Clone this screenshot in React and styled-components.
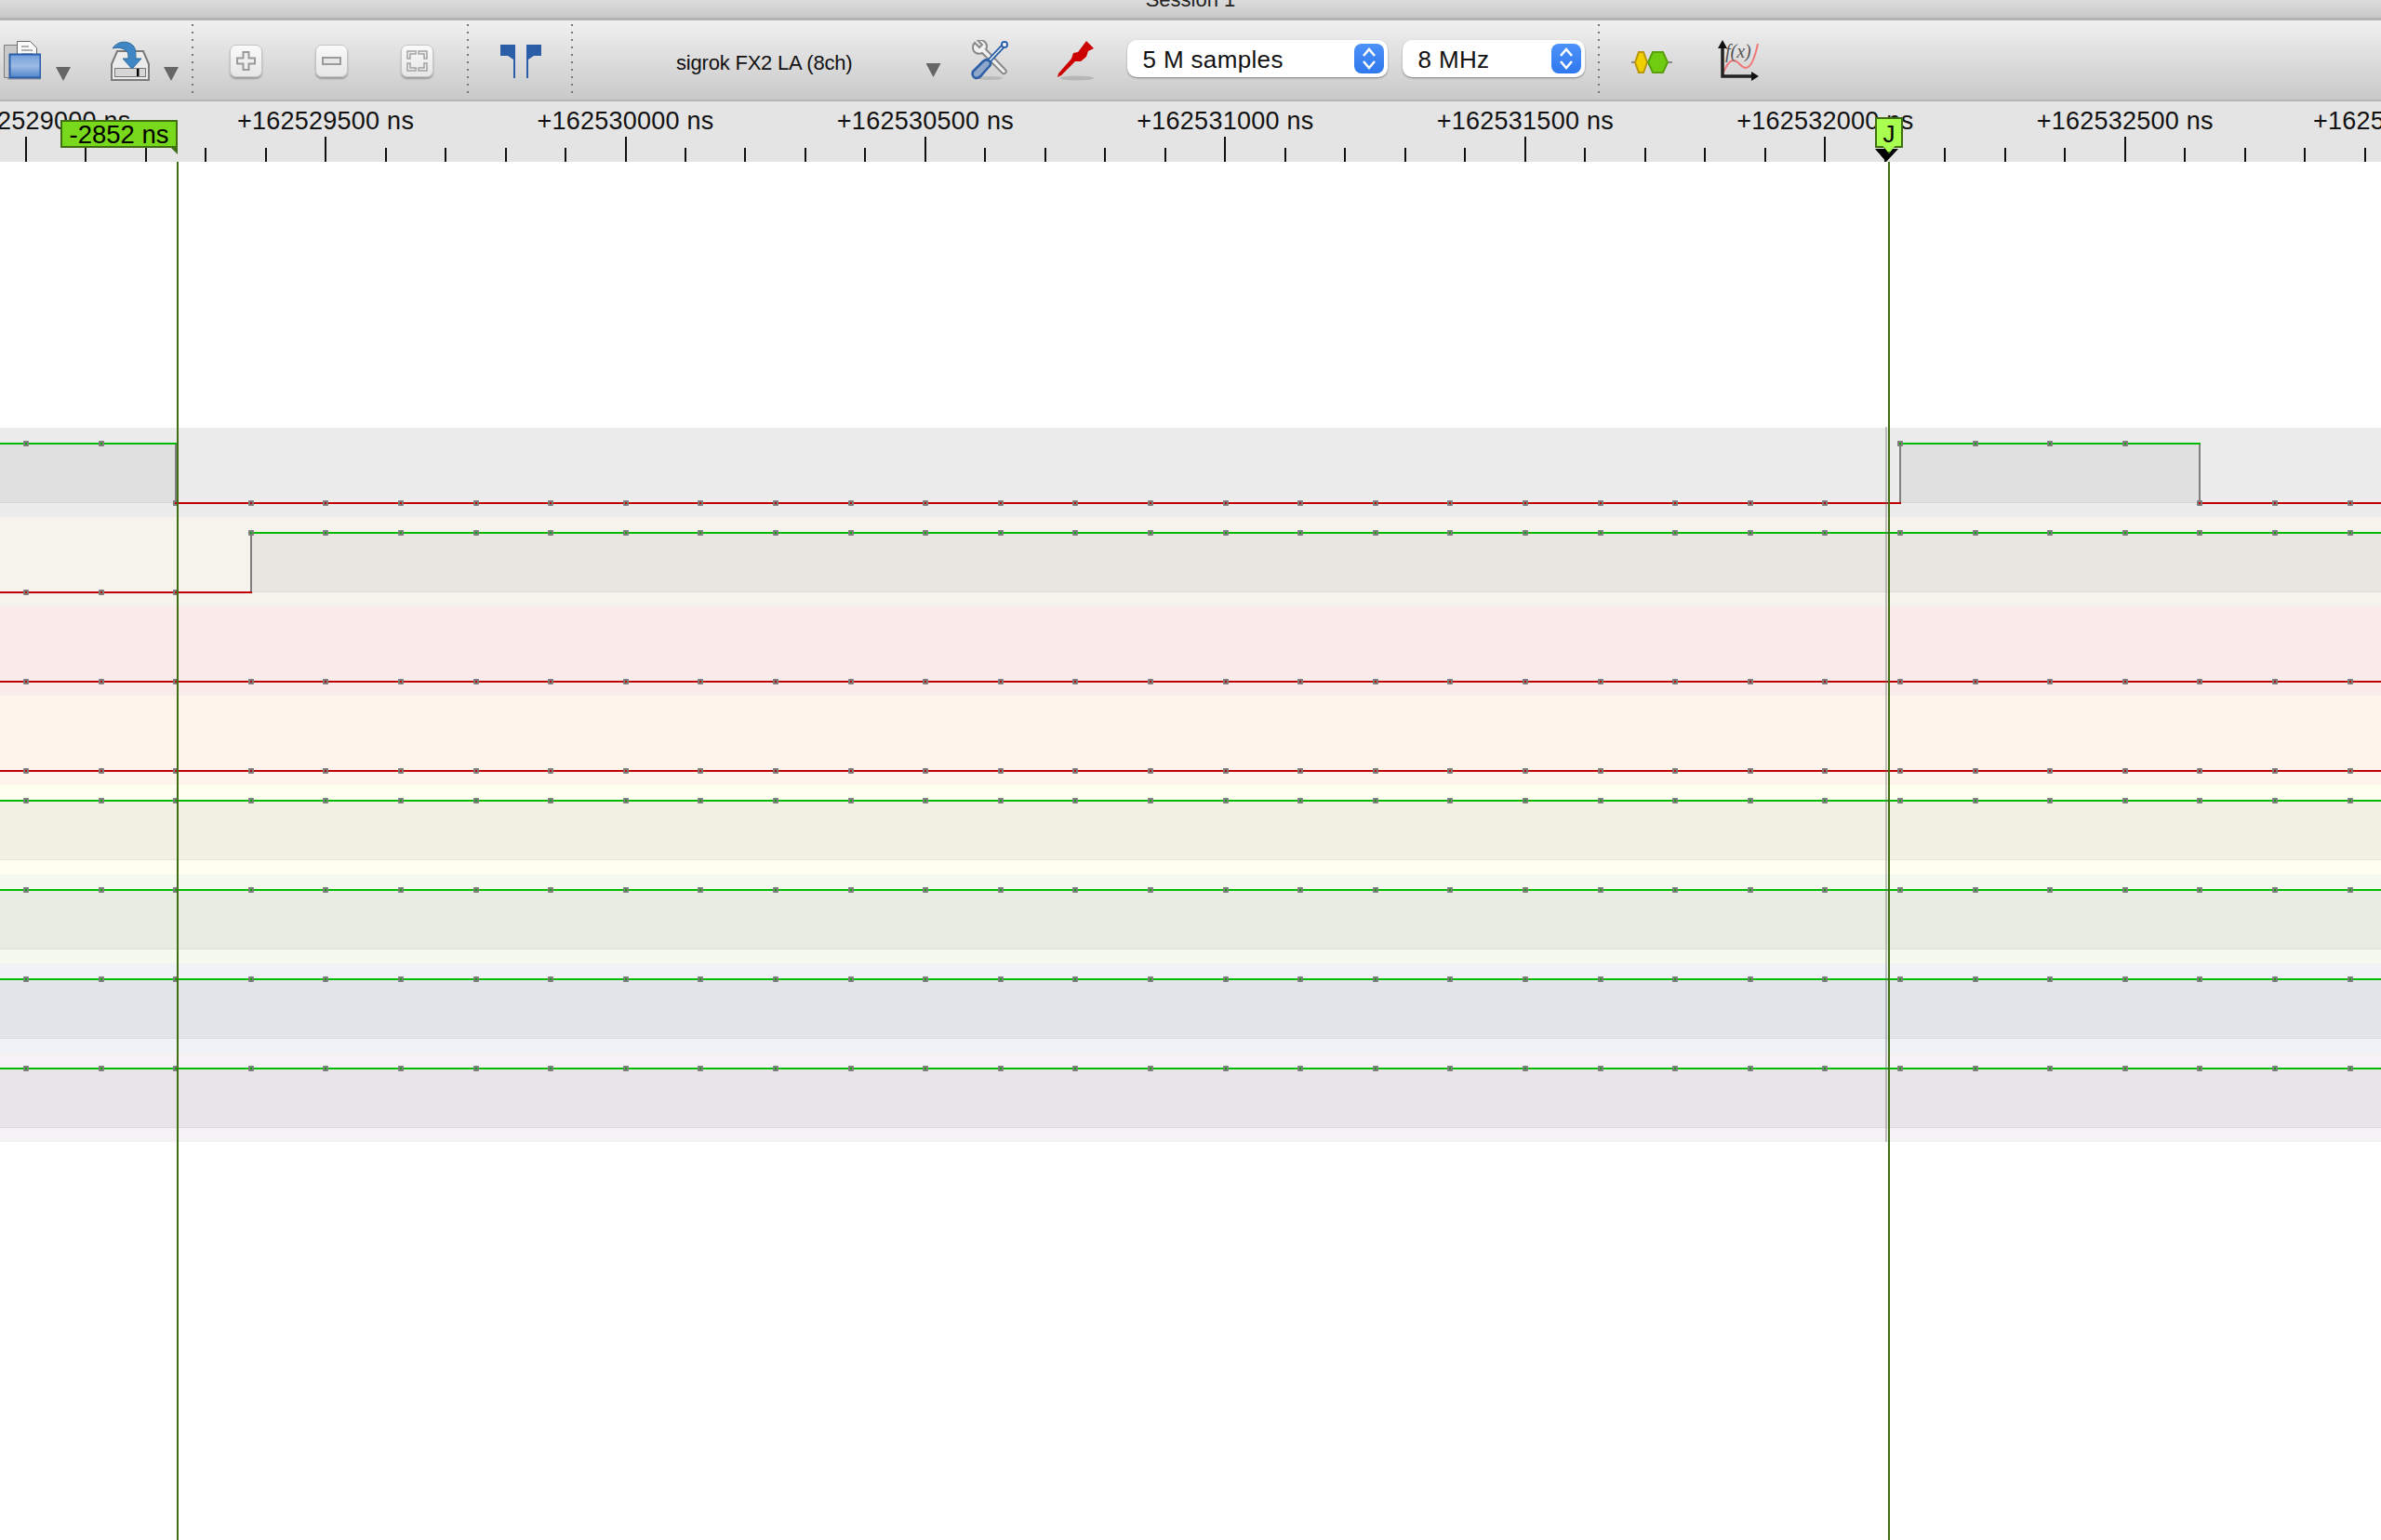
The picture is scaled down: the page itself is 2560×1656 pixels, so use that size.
import styled, { createGlobalStyle } from "styled-components";

const MAJOR_STEP = 322.45;
const MINOR_STEP = MAJOR_STEP / 5;
const RULER_ORIGIN = 27.6;
const SAMPLE_STEP = 80.6;
const SAMPLE_ORIGIN = 28;
const SAMPLE_COUNT = 34;
const HIGH_Y = 17;
const LOW_Y = 81;

const range = (from, to) => Array.from({ length: to - from + 1 }, (_, i) => from + i);
const sampleX = (k) => Math.round(SAMPLE_ORIGIN + SAMPLE_STEP * k);

const channels = [
  { bg: "#ececec", high: (k) => k < 2 || (k >= 25 && k < 29) },
  { bg: "#f6f2ec", high: (k) => k >= 3 },
  { bg: "#fbecec", high: () => false },
  { bg: "#fff4eb", high: () => false },
  { bg: "#fffff0", high: () => true },
  { bg: "#f4faed", high: () => true },
  { bg: "#eff3f8", high: () => true },
  { bg: "#f4f2f4", high: () => true },
];

// the two labels at the edges sit off their ticks in the original
const rulerLabels = [
  { x: 45.5, text: "+162529000 ns" },
  ...range(1, 7).map((i) => ({
    x: RULER_ORIGIN + MAJOR_STEP * i,
    text: `+${162529000 + i * 500} ns`,
  })),
  { x: 2582, text: "+162533000 ns" },
];

const GlobalStyle = createGlobalStyle`
  html, body {
    margin: 0;
    padding: 0;
    background: #fff;
  }
  body {
    font-family: "Liberation Sans", Arial, sans-serif;
  }
`;

const Page = styled.div`
  width: 2560px;
  height: 1656px;
  display: flex;
  flex-direction: column;
  overflow: hidden;
  background: #fff;
`;

const TitleBar = styled.div`
  height: 19px;
  flex: none;
  overflow: hidden;
  display: flex;
  justify-content: center;
  background: linear-gradient(#dcdcdc, #c8c8c8);
  border-bottom: 3px solid #b4b4b4;
`;

const Title = styled.span`
  font-size: 22px;
  line-height: 26px;
  margin-top: -13px;
  color: #222;
`;

const Toolbar = styled.div`
  height: 85px;
  flex: none;
  display: flex;
  background: linear-gradient(#f0f0f0, #c9c9c9);
  border-bottom: 2px solid #b6b6b6;
`;

const Section = styled.div`
  width: ${(p) => p.$w}px;
  padding-left: ${(p) => p.$pad}px;
  padding-top: 21px;
  box-sizing: border-box;
  display: flex;
  align-items: flex-start;
  flex: none;
`;

const Separator = styled.div`
  width: 2px;
  height: 80px;
  margin-top: 4px;
  flex: none;
  background: repeating-linear-gradient(#777 0 2px, transparent 2px 8px);
`;

const Icon = styled.svg`
  display: block;
  flex: none;
  margin-left: ${(p) => p.$ml || 0}px;
`;

const DropArrow = styled.div`
  width: 16px;
  height: 15px;
  flex: none;
  margin-left: ${(p) => p.$ml}px;
  margin-top: ${(p) => p.$mt}px;
  background: #666;
  clip-path: polygon(0 0, 100% 0, 50% 100%);
`;

const ZoomGroup = styled.div`
  display: flex;
  gap: 57px;
  padding-top: 5px;
`;

const ZoomButton = styled.button`
  width: 35px;
  height: 35px;
  padding: 0;
  display: flex;
  align-items: center;
  justify-content: center;
  border: 1px solid #c4c4c4;
  border-radius: 7px;
  background: linear-gradient(#fafafa, #e6e6e6);
  box-shadow: 0 2px 2px rgba(0, 0, 0, 0.28);
`;

const DeviceName = styled.div`
  width: 268.5px;
  flex: none;
  font-size: 22px;
  line-height: 50px;
  letter-spacing: -0.2px;
  color: #111;
`;

const SelectBox = styled.div`
  width: ${(p) => p.$w}px;
  height: 40px;
  flex: none;
  margin-left: ${(p) => p.$ml}px;
  padding: 4px 4px 4px 17px;
  box-sizing: border-box;
  display: flex;
  justify-content: space-between;
  border-radius: 10px;
  background: #fff;
  box-shadow: 0 1px 2px rgba(0, 0, 0, 0.4);
  font-size: 26px;
  line-height: 34px;
  letter-spacing: 0.35px;
  color: #111;
`;

const Stepper = styled.div`
  width: 32px;
  height: 32px;
  flex: none;
  display: flex;
  align-items: center;
  justify-content: center;
  border-radius: 8px;
  background: linear-gradient(#4d92f8, #2f78ee);
`;

const Canvas = styled.div`
  flex: 1;
  position: relative;
  display: flex;
  flex-direction: column;
`;

const Ruler = styled.div`
  height: 65px;
  flex: none;
  position: relative;
  overflow: hidden;
  background: #e4e4e4;
`;

const Ticks = styled.svg`
  position: absolute;
  left: 0;
  top: 0;
`;

const RulerLabel = styled.span`
  position: absolute;
  top: 0;
  transform: translateX(-50%);
  font-size: 27px;
  line-height: 43px;
  letter-spacing: 0.25px;
  white-space: nowrap;
  color: #111;
`;

const CursorFlag = styled.div`
  position: absolute;
  left: 65px;
  top: 20px;
  width: 126px;
  height: 30px;
  box-sizing: border-box;
  border: 2px solid #3f6f10;
  background: #78d81c;
  font-size: 27.5px;
  line-height: 27px;
  text-align: center;
  white-space: nowrap;
  color: #000;

  &::after {
    content: "";
    position: absolute;
    right: -2px;
    top: 26px;
    width: 9px;
    height: 9px;
    background: #3f6f10;
    clip-path: polygon(0 0, 100% 0, 100% 100%);
  }
`;

const TriggerArrow = styled.div`
  position: absolute;
  left: 2016px;
  top: 51px;
  width: 25px;
  height: 14px;
  background: #000;
  clip-path: polygon(0 0, 100% 0, 48% 100%);
`;

const MarkerFlag = styled.div`
  position: absolute;
  left: 2016px;
  top: 17px;
  width: 30px;
  height: 33px;
  box-sizing: border-box;
  border: 2px solid #3f6f10;
  background: #a9ff50;
  font-size: 26px;
  line-height: 32px;
  text-align: center;
  color: #000;

  &::after {
    content: "";
    position: absolute;
    left: 5px;
    top: 27px;
    width: 16px;
    height: 8px;
    background: #a9ff50;
    border-bottom: 2px solid #3f6f10;
    clip-path: polygon(0 0, 100% 0, 50% 100%);
  }
`;

const Bands = styled.div`
  margin-top: 286px;
  display: flex;
  flex-direction: column;
`;

const Band = styled.div`
  height: 96px;
  background: ${(p) => p.$bg};
`;

const TraceSvg = styled.svg`
  display: block;
`;

const CursorLine = styled.div`
  position: absolute;
  left: ${(p) => p.$x}px;
  top: 65px;
  bottom: 0;
  width: 2px;
  background: #3f6f10;
`;

const TriggerLine = styled.div`
  position: absolute;
  left: 2027px;
  top: 350px;
  height: 769px;
  width: 2px;
  background: rgba(110, 110, 110, 0.4);
`;

function OpenIcon() {
  return (
    <Icon width="40" height="44" viewBox="0 0 40 44">
      <defs>
        <linearGradient id="folderBlue" x1="0" y1="0" x2="0" y2="1">
          <stop offset="0" stopColor="#6f9fdc" />
          <stop offset="0.5" stopColor="#9dbce4" />
          <stop offset="1" stopColor="#4f84cc" />
        </linearGradient>
      </defs>
      <path d="M0.5 5.5h16v35h-16z" fill="#c9c9c9" stroke="#7d7d7d" />
      <path d="M14.5 1.5h14l7 7v14h-21z" fill="#fafafa" stroke="#666" />
      <path d="M19 7h8M19 11h12M19 15h12" stroke="#999" strokeWidth="1.5" />
      <rect x="6.5" y="15.5" width="33" height="25" fill="url(#folderBlue)" stroke="#2a5ea8" strokeWidth="2" />
      <rect x="4" y="41" width="36" height="2" fill="rgba(0,0,0,0.14)" />
    </Icon>
  );
}

function SaveIcon() {
  return (
    <Icon $ml={42} width="44" height="44" viewBox="0 0 44 44">
      <path d="M8 12h28l6 14v17H2V26z" fill="#ececec" stroke="#7b7b7b" strokeWidth="2" />
      <rect x="5.5" y="30.5" width="33" height="9" fill="#d6d6d6" stroke="#777" />
      <rect x="29" y="31" width="2.5" height="8" fill="#000" />
      <path
        d="M3 9C8 1 19 0 25 6c3 3 3 8 3 14h6L24 31 14 20h6c0-4 0-7-3-9-4-3-9-3-14-2z"
        fill="#3f86c4"
        stroke="#2f6c9f"
      />
    </Icon>
  );
}

function PlusGlyph() {
  return (
    <svg width="25" height="25" viewBox="0 0 25 25">
      <path
        d="M9.500 3h6v6.500H22v6h-6.500v6.500h-6V15.500H3v-6h6.500z"
        fill="#efefef"
        stroke="#9a9a9a"
        strokeWidth="2"
      />
    </svg>
  );
}

function MinusGlyph() {
  return (
    <svg width="25" height="25" viewBox="0 0 25 25">
      <rect x="3" y="9" width="19" height="7" fill="#e6e6e6" stroke="#9a9a9a" strokeWidth="2" />
    </svg>
  );
}

function FitGlyph() {
  return (
    <svg width="27" height="27" viewBox="0 0 27 27" fill="none" stroke="#a2a2a2" strokeWidth="1.5">
      <path d="M3 11V3h9v3H6v5zM24 11V3h-9v3h6v5zM3 16v8h9v-3H6v-5zM24 16v8h-9v-3h6v-5z" fill="#eeeeee" />
    </svg>
  );
}

function CursorsIcon() {
  return (
    <Icon width="44" height="44" viewBox="0 0 44 44">
      <path d="M0 5H16V41H14V21L8 17H0z" fill="#2b5ea6" />
      <path d="M44 5H28V41H30V21L36 17H44z" fill="#2b5ea6" />
    </Icon>
  );
}

function ToolsIcon() {
  return (
    <Icon $ml={32} width="40" height="44" viewBox="0 0 40 44">
      <ellipse cx="20" cy="41" rx="14" ry="2" fill="rgba(0,0,0,0.12)" />
      <path
        d="M4 3l5 5 3-3-5-5C12-1 17 2 17 7c0 1 0 2-1 3l21 22c2 2 0 5-3 4L12 14c-4 2-10 0-10-6 0-2 1-4 2-5z"
        fill="#f1f1f1"
        stroke="#8a8a8a"
        strokeWidth="2"
      />
      <path d="M18 24L35 6" stroke="#2b5ea6" strokeWidth="5" />
      <path d="M18 24L35 6" stroke="#e8eef6" strokeWidth="1.5" />
      <circle cx="36" cy="5" r="3" fill="#fff" stroke="#2b5ea6" strokeWidth="2" />
      <path
        d="M2 34c-1 3 0 6 3 7 3 0 5-1 7-4l8-9c2-2 1-5-1-6s-4-1-6 1z"
        fill="#8ea6c8"
        stroke="#2b5ea6"
        strokeWidth="2.5"
      />
    </Icon>
  );
}

function ProbeIcon() {
  return (
    <Icon $ml={53} width="40" height="44" viewBox="0 0 40 44">
      <ellipse cx="21" cy="41" rx="18" ry="2.5" fill="rgba(0,0,0,0.14)" />
      <path d="M0 40L1 36L15 20L17 14L22 13L31 1L39 9L33 12L31 18L25 23L19 23L4 38z" fill="#cc0000" />
    </Icon>
  );
}

function DecoderIcon() {
  return (
    <Icon $ml={0} width="44" height="44" viewBox="0 0 44 44">
      <path d="M0 24h44" stroke="#888" strokeWidth="2" />
      <path d="M4 24l4-11h5l4 11-4 11H8z" fill="#f0d000" stroke="#b8960a" strokeWidth="2" />
      <path d="M18 24l5-11h11l5 11-5 11H23z" fill="#6fcc10" stroke="#5aa00e" strokeWidth="2" />
    </Icon>
  );
}

function MathIcon() {
  return (
    <Icon $ml={49} width="44" height="44" viewBox="0 0 44 44">
      <path d="M5 37C9 28 12 22 17 22c5 0 8 8 13 8 6 0 10-12 13-26" fill="none" stroke="#f07878" strokeWidth="2" />
      <text x="8" y="19" fontFamily="'Liberation Serif', serif" fontStyle="italic" fontSize="20" fill="#555">
        f(x)
      </text>
      <path d="M5 6v33h33" fill="none" stroke="#222" strokeWidth="3.5" />
      <path d="M5 0l5 9H0zM44 39l-8-5v10z" fill="#111" />
    </Icon>
  );
}

function StepperChevrons() {
  return (
    <svg width="18" height="26" viewBox="0 0 18 26" fill="none" stroke="#fff" strokeWidth="2.5">
      <path d="M3 10l6-7 6 7M3 16l6 7 6-7" />
    </svg>
  );
}

function Select({ value, width, ml }) {
  return (
    <SelectBox $w={width} $ml={ml}>
      {value}
      <Stepper>
        <StepperChevrons />
      </Stepper>
    </SelectBox>
  );
}

function RulerTicks() {
  return (
    <Ticks width="2560" height="65">
      {range(0, 40).map((i) => {
        const x = Math.round(RULER_ORIGIN + MINOR_STEP * i);
        return <rect key={i} x={x - 1} y={i % 5 === 0 ? 38 : 50} width="2" height={i % 5 === 0 ? 27 : 15} fill="#111" />;
      })}
    </Ticks>
  );
}

// one channel: high samples get a shaded block under the green line
function Trace({ high }) {
  const samples = range(-1, SAMPLE_COUNT);
  const levelY = (k) => (high(Math.max(k, 0)) ? HIGH_Y : LOW_Y);
  return (
    <TraceSvg width="2560" height="96">
      {samples.map((k) => {
        if (!high(Math.max(k, 0))) return null;
        return (
          <g key={k}>
            <rect x={sampleX(k)} y={HIGH_Y} width={sampleX(k + 1) - sampleX(k)} height={LOW_Y - HIGH_Y} fill="rgba(0,0,0,0.05)" />
            <rect x={sampleX(k)} y={LOW_Y - 1} width={sampleX(k + 1) - sampleX(k)} height="1" fill="rgba(0,0,0,0.05)" />
          </g>
        );
      })}
      {samples.map((k) => {
        const y = levelY(k);
        const next = levelY(k + 1);
        return (
          <g key={k}>
            {y !== next && (
              <path d={`M${sampleX(k + 1)} ${HIGH_Y}V${LOW_Y}`} stroke="#808080" strokeWidth="2" />
            )}
            <path
              d={`M${sampleX(k)} ${y}H${sampleX(k + 1) + 1}`}
              stroke={y === HIGH_Y ? "#00bb00" : "#c00000"}
              strokeWidth="2"
            />
          </g>
        );
      })}
      {samples.map((k) => {
        const y = levelY(k);
        return (
          <g key={k}>
            <rect x={sampleX(k) - 3} y={y - 3} width="6" height="6" rx="1" fill="#7d7d7d" />
            <rect x={sampleX(k) - 1} y={y - 1} width="2" height="2" fill={y === HIGH_Y ? "#00aa00" : "#c00000"} />
          </g>
        );
      })}
    </TraceSvg>
  );
}

export default function App() {
  return (
    <Page>
      <GlobalStyle />
      <TitleBar>
        <Title>Session 1</Title>
      </TitleBar>
      <Toolbar>
        <Section $w={206} $pad={4}>
          <OpenIcon />
          <DropArrow $ml={16} $mt={29} />
          <SaveIcon />
          <DropArrow $ml={14} $mt={29} />
        </Section>
        <Separator />
        <Section $w={294} $pad={39}>
          <ZoomGroup>
            <ZoomButton>
              <PlusGlyph />
            </ZoomButton>
            <ZoomButton>
              <MinusGlyph />
            </ZoomButton>
            <ZoomButton>
              <FitGlyph />
            </ZoomButton>
          </ZoomGroup>
        </Section>
        <Separator />
        <Section $w={110} $pad={34}>
          <CursorsIcon />
        </Section>
        <Separator />
        <Section $w={1102} $pad={111}>
          <DeviceName>sigrok FX2 LA (8ch)</DeviceName>
          <DropArrow $ml={0} $mt={25} />
          <ToolsIcon />
          <ProbeIcon />
          <Select value="5 M samples" width={280} ml={35} />
          <Select value="8 MHz" width={196} ml={16} />
        </Section>
        <Separator />
        <Section $w={840} $pad={34}>
          <DecoderIcon />
          <MathIcon />
        </Section>
      </Toolbar>
      <Canvas>
        <Ruler>
          <RulerTicks />
          {rulerLabels.map((label) => (
            <RulerLabel key={label.text} style={{ left: label.x }}>
              {label.text}
            </RulerLabel>
          ))}
          <CursorFlag>-2852 ns</CursorFlag>
          <TriggerArrow />
          <MarkerFlag>J</MarkerFlag>
        </Ruler>
        <Bands>
          {channels.map((channel, i) => (
            <Band key={i} $bg={channel.bg}>
              <Trace high={channel.high} />
            </Band>
          ))}
        </Bands>
        <TriggerLine />
        <CursorLine $x={190} />
        <CursorLine $x={2030} />
      </Canvas>
    </Page>
  );
}
